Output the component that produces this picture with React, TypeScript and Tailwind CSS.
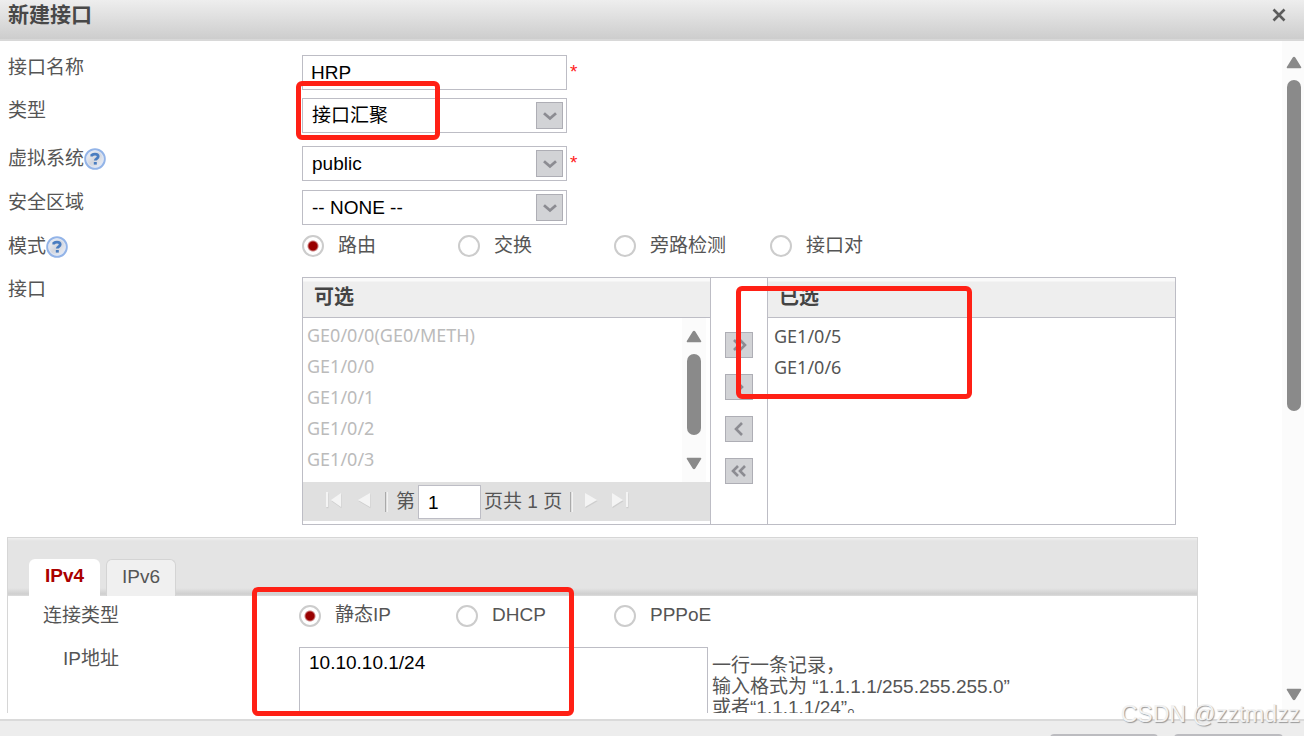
import type { ReactNode } from "react";

const fieldBox = "w-[265px] border border-[#bdbdc5] bg-white text-black";

function HelpIcon() {
  return (
    <svg viewBox="0 0 22 22" className="h-[22px] w-[22px]" aria-hidden="true">
      <defs>
        <linearGradient id="helpFill" x1="0" y1="0" x2="1" y2="1">
          <stop offset="0" stopColor="#ffffff" />
          <stop offset="0.5" stopColor="#d3d6de" />
          <stop offset="1" stopColor="#f5f7fc" />
        </linearGradient>
      </defs>
      <circle cx="11" cy="11" r="9.8" fill="url(#helpFill)" stroke="#93b4e8" strokeWidth="2" />
      <circle cx="11" cy="11" r="8.2" fill="none" stroke="#dbe6f8" strokeWidth="1" />
      <path d="M7.800 8.400V7.200c1-.8 2-1.100 3.200-1.100 2 0 3.200.9 3.200 2.400 0 2.200-2.900 2-2.900 4.100" fill="none" stroke="#4a7dc0" strokeWidth="2.800" />
      <rect x="9.800" y="14" width="3" height="2.600" fill="#4a7dc0" />
    </svg>
  );
}

function Triangle({ down = false }: { down?: boolean }) {
  return (
    <svg viewBox="0 0 16 13" className="h-[13px] w-[16px] shrink-0" aria-hidden="true">
      <path
        d={down ? "M1.500 1.500h13L8.600 11q-.6.8-1.200 0z" : "M1.500 11.500h13L8.600 2q-.6-.8-1.200 0z"}
        fill="#8a8a8a"
        stroke="#8a8a8a"
        strokeWidth="1.6"
        strokeLinejoin="round"
      />
    </svg>
  );
}

function Row({ label, htmlFor, help, height, children }: {
  label: string; htmlFor?: string; help?: boolean; height: string; children: ReactNode;
}) {
  return (
    <div className={`flex items-start ${height}`}>
      <div className="flex w-[294px] shrink-0 items-center leading-[26px]">
        <label htmlFor={htmlFor}>{label}</label>
        {help && <button type="button" aria-label="帮助"><HelpIcon /></button>}
      </div>
      {children}
    </div>
  );
}

function Select({ id, value }: { id: string; value: string }) {
  return (
    <div className="relative">
      <select id={id} className={`${fieldBox} h-[35px] appearance-none pt-px pl-[9px]`}>
        <option>{value}</option>
      </select>
      <span className="pointer-events-none absolute top-1 right-1 flex h-[27px] w-[27px] items-center justify-center border border-[#aeaeb5] bg-[#d2d3d6]">
        <svg viewBox="0 0 16 10" className="h-[10px] w-[16px]" aria-hidden="true">
          <path d="M2 2.200l6 5.300 6-5.300" fill="none" stroke="#8c8c92" strokeWidth="2.800" />
        </svg>
      </span>
    </div>
  );
}

function Radio({ name, label, checked = false, width }: {
  name: string; label: string; checked?: boolean; width: string;
}) {
  return (
    <label className={`flex h-6 items-center gap-[14px] whitespace-nowrap ${width}`}>
      <input
        type="radio"
        name={name}
        defaultChecked={checked}
        className="h-[22px] w-[22px] shrink-0 appearance-none rounded-full border-2 border-[#cccccc] bg-white checked:bg-[radial-gradient(circle,#990000_4px,#ffffff_6px)]"
      />
      {label}
    </label>
  );
}

function Required() {
  return <span className="flex h-[35px] items-center pl-[3px] text-[#ff1a1a]">*</span>;
}

const moves = [
  { label: "全部添加", d: "M3 3l5 5-5 5M9 3l5 5-5 5" },
  { label: "添加", d: "M6 3l5 5-5 5" },
  { label: "移除", d: "M11 2l-6 6 6 6" },
  { label: "全部移除", d: "M7 3l-5 5 5 5M14 3l-5 5 5 5" },
];

function PagerIcon({ label, d }: { label: string; d: string }) {
  return (
    <button type="button" aria-label={label}>
      <svg viewBox="0 0 20 20" className="h-5 w-5" aria-hidden="true">
        <path d={d} fill="#cecece" transform="translate(0.500 1.200)" />
        <path d={d} fill="#f4f4f4" />
      </svg>
    </button>
  );
}

function ListHeader({ children }: { children: ReactNode }) {
  return (
    <div className="h-10 border-b border-[#bdbdc5] bg-[linear-gradient(#fafafa_3px,#eeeeee_4px)] pl-[11px] text-[20px] leading-[38px] font-bold text-[#444444]">
      {children}
    </div>
  );
}

function Transfer() {
  return (
    <div className="mr-[106px] grid h-[248px] flex-1 grid-cols-[1fr_58px_1fr] border border-[#bdbdc5]">
      <div className="flex flex-col">
        <ListHeader>可选</ListHeader>
        <div className="flex min-h-0 flex-1 overflow-hidden">
          <ul className="flex-1 pt-[2px] pl-1 font-['Noto_Sans',sans-serif] text-[18px] leading-[31px] text-[#bbbbbb]">
            {["GE0/0/0(GE0/METH)", "GE1/0/0", "GE1/0/1", "GE1/0/2", "GE1/0/3"].map((n) => <li key={n}>{n}</li>)}
          </ul>
          <div className="mr-1 flex w-6 flex-col items-center bg-[#fbfbfb] pt-3 pb-3">
            <Triangle />
            <div className="mt-[11px] h-[81px] w-[14px] rounded-full bg-[#8a8a8a]" />
            <div className="mt-auto"><Triangle down /></div>
          </div>
        </div>
        <div className="mb-[3px] flex h-[39px] items-center bg-[#e0e0e0] pl-5">
          <div className="flex items-center gap-[10px] pb-1">
            <PagerIcon label="首页" d="M3 2h2v15H3zM18 3v14L8 10z" />
            <PagerIcon label="上一页" d="M17 3v14L5 10z" />
          </div>
          <span className="ml-3 h-5 w-[3px] border-r border-l border-r-[#f2f2f2] border-l-[#aaaaaa]" />
          <label htmlFor="page" className="ml-2 pt-[2px]">第</label>
          <input id="page" defaultValue="1" className="mx-[3px] h-[34px] w-[63px] border border-[#bdbdc5] bg-white pt-[2px] pl-[9px] text-black" />
          <span className="pt-[2px]">页共 1 页</span>
          <span className="ml-2 h-5 w-[3px] border-r border-l border-r-[#f2f2f2] border-l-[#aaaaaa]" />
          <div className="ml-2 flex items-center gap-2 pb-1">
            <PagerIcon label="下一页" d="M4 3v14l12-7z" />
            <PagerIcon label="末页" d="M3 3v14l11-7zM17 2h2v15h-2z" />
          </div>
        </div>
      </div>
      <div className="flex flex-col items-center gap-4 border-x border-[#bdbdc5] pt-[54px]">
        {moves.map((m) => (
          <button key={m.label} type="button" aria-label={m.label} className="flex h-[26px] w-7 items-center justify-center border border-[#aeaeb5] bg-[#d2d3d6]">
            <svg viewBox="0 0 16 16" className="h-4 w-4" aria-hidden="true">
              <path d={m.d} fill="none" stroke="#8c8c92" strokeWidth="2.600" />
            </svg>
          </button>
        ))}
      </div>
      <div className="flex flex-col">
        <ListHeader>已选</ListHeader>
        <ul className="pt-[3px] pl-[6px] font-['Noto_Sans',sans-serif] text-[18px] leading-[31px]">
          <li>GE1/0/5</li>
          <li>GE1/0/6</li>
        </ul>
      </div>
    </div>
  );
}

function AddressPanel() {
  return (
    <section className="mt-3 mr-[84px] -ml-px border border-[#d6d6d6] bg-white">
      <div role="tablist" className="flex h-[58px] items-end gap-[6px] bg-[linear-gradient(#f0f0f0_0px,#e4e4e4_3px,#e4e4e4_50px,#cfcfcf_56px,#dedede_58px)] pl-[21px]">
        <button type="button" role="tab" aria-selected="true" className="h-[37px] w-[71px] rounded-t-md bg-white pb-[2px] font-bold text-[#aa0000]">IPv4</button>
        <button type="button" role="tab" aria-selected="false" className="h-[37px] w-[70px] rounded-t-md border border-b-0 border-[#d4d4d4] bg-[#f0f0f0] pb-[2px]">IPv6</button>
      </div>
      <div className="flex h-[51px] items-center pb-3 pl-[35px]">
        <span className="w-[256px] shrink-0 pt-[2px]">连接类型</span>
        <Radio name="conn" label="静态IP" checked width="w-[157px]" />
        <Radio name="conn" label="DHCP" width="w-[158px]" />
        <Radio name="conn" label="PPPoE" width="w-auto" />
      </div>
      <div className="flex items-start pl-[55px]">
        <label htmlFor="ip" className="w-[236px] shrink-0 leading-6">IP地址</label>
        <textarea id="ip" defaultValue="10.10.10.1/24" className="h-[96px] w-[409px] resize-none border border-[#bdbdc5] bg-white px-[9px] py-[3px] leading-6 text-black" />
        <p className="pt-2 pl-1 leading-[21px] whitespace-nowrap">
          一行一条记录，<br />输入格式为 “1.1.1.1/255.255.255.0”<br />或者“1.1.1.1/24”。
        </p>
      </div>
    </section>
  );
}

export default function App() {
  return (
    <div className="relative flex h-screen flex-col overflow-hidden bg-white font-['Liberation_Sans','Noto_Sans_CJK_SC',sans-serif] text-[19px] text-[#555555]">
      <header className="flex h-[41px] shrink-0 items-start justify-between border-b-2 border-[#d8d8d8] bg-linear-to-b from-[#eeeeee] to-[#cdcdcd] pr-4 pl-2">
        <h1 className="text-[21px] leading-[30px] font-bold text-[#484848]">新建接口</h1>
        <button type="button" aria-label="关闭" className="mt-1 flex h-[22px] w-[18px] items-center justify-center">
          <svg viewBox="0 0 14 14" className="h-[14px] w-[14px]" aria-hidden="true">
            <path d="M1.500 1.500l11 11M12.500 1.500l-11 11" stroke="#5c5c5c" strokeWidth="2.600" />
          </svg>
        </button>
      </header>

      <main className="flex min-h-0 flex-1">
        <form className="mb-[6px] min-w-0 flex-1 overflow-hidden pt-[14px] pl-2">
          <Row label="接口名称" htmlFor="name" height="h-[43px]">
            <input id="name" defaultValue="HRP" className={`${fieldBox} h-[35px] pl-2`} />
            <Required />
          </Row>
          <Row label="类型" htmlFor="type" height="h-[48px]">
            <Select id="type" value="接口汇聚" />
          </Row>
          <Row label="虚拟系统" htmlFor="vsys" help height="h-[44px]">
            <Select id="vsys" value="public" />
            <Required />
          </Row>
          <Row label="安全区域" htmlFor="zone" height="h-[44px]">
            <Select id="zone" value="-- NONE --" />
          </Row>
          <Row label="模式" help height="h-[43px]">
            <Radio name="mode" label="路由" checked width="w-[156px]" />
            <Radio name="mode" label="交换" width="w-[156px]" />
            <Radio name="mode" label="旁路检测" width="w-[156px]" />
            <Radio name="mode" label="接口对" width="w-auto" />
          </Row>
          <Row label="接口" height="h-[248px]">
            <Transfer />
          </Row>
          <AddressPanel />
        </form>
        <div className="flex w-[22px] shrink-0 flex-col items-center bg-[#fbfbfb] pt-[15px] pb-[18px] pl-[2px]">
          <Triangle />
          <div className="mt-[11px] h-[331px] w-[14px] rounded-full bg-[#8a8a8a]" />
          <div className="mt-auto"><Triangle down /></div>
        </div>
      </main>

      <footer className="flex h-[17px] shrink-0 items-start justify-end gap-4 border-t-2 border-[#dadada] bg-[#ededed] pt-[13px] pr-[21px]">
        <button type="button" aria-label="确定" className="h-8 w-[108px] rounded-t-sm bg-[#bcbcc0]" />
        <button type="button" aria-label="取消" className="h-8 w-[109px] rounded-t-sm bg-[#bcbcc0]" />
      </footer>

      <div className="pointer-events-none absolute top-[81px] left-[296px] h-[59px] w-[144px] rounded-md border-[5px] border-[#ff2015]" />
      <div className="pointer-events-none absolute top-[286px] left-[736px] h-[113px] w-[236px] rounded-md border-[5px] border-[#ff2015]" />
      <div className="pointer-events-none absolute top-[587px] left-[252px] h-[129px] w-[322px] rounded-md border-[5px] border-[#ff2015]" />
      <span className="pointer-events-none absolute right-1 bottom-[6px] text-[23px] leading-8 text-[#f2f2f2] [text-shadow:1px_1px_1px_#999999]">CSDN @zztmdzz</span>
    </div>
  );
}
